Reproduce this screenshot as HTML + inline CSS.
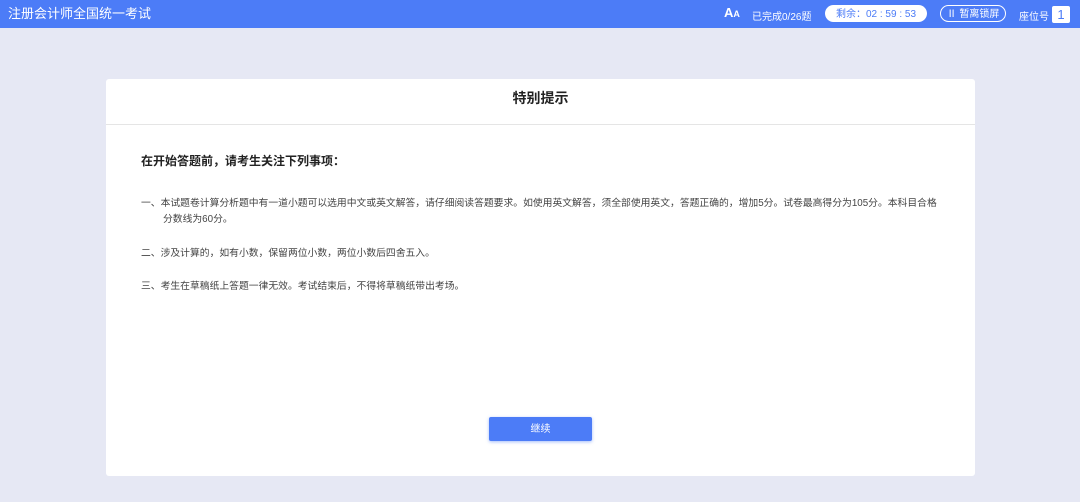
<!DOCTYPE html>
<html><head><meta charset="utf-8"><style>
*{margin:0;padding:0;box-sizing:border-box}
body{width:1080px;height:502px;background:#e6e8f4;font-family:"Liberation Sans","Noto Sans CJK SC",sans-serif;position:relative;overflow:hidden;color:#333}
.hd{position:absolute;left:0;top:0;width:1080px;height:28px;background:#4c7cf7;color:#fff}
.t{position:absolute;left:8px;top:3px;font-size:13px}
.a{position:absolute;font-size:10px;top:8px}
.pill{position:absolute;top:5px;height:17px;border-radius:9px;font-size:10px;text-align:center}
.pill span{position:absolute;left:0;right:0;top:4px;line-height:12px}
.card{position:absolute;left:106px;top:79px;width:869px;height:397px;background:#fff;border-radius:3px}
.ct{height:46px;border-bottom:1px solid #e5e5e5;text-align:center;font-size:14px;font-weight:bold;line-height:38px;color:#222}
.p{position:absolute;font-size:9.8px;color:#444;white-space:nowrap}
.btn{position:absolute;left:383px;top:338px;width:103px;height:24px;background:#4c7cf7;color:#fff;font-size:10px;text-align:center;line-height:25px;border-radius:2px;box-shadow:0 1px 3px rgba(76,124,247,.5)}
</style></head><body>
<div class="hd">
<div class="t">注册会计师全国统一考试</div>
<div class="a" style="left:724px;top:5px;font-size:13px;font-weight:bold">A<span style="font-size:9px">A</span></div>
<div class="a" style="left:752px">已完成0/26题</div>
<div class="pill" style="left:825px;width:102px;background:#fff;color:#4c7cf7"><span>剩余：02 : 59 : 53</span></div>
<div class="pill" style="left:940px;width:66px;border:1px solid #fff;color:#fff"><span style="top:3px">Ⅱ 暂离锁屏</span></div>
<div class="a" style="left:1019px">座位号</div>
<div style="position:absolute;left:1052px;top:6px;width:18px;height:17px;background:#fff;color:#4c7cf7;font-size:13px;text-align:center;line-height:17px;border-radius:2px">1</div>
</div>
<div class="card">
<div class="ct">特别提示</div>
<div class="p" style="left:35px;top:73px;font-size:12px;font-weight:bold;color:#222">在开始答题前，请考生关注下列事项：</div>
<div class="p" style="left:35px;top:116px">一、本试题卷计算分析题中有一道小题可以选用中文或英文解答，请仔细阅读答题要求。如使用英文解答，须全部使用英文，答题正确的，增加5分。试卷最高得分为105分。本科目合格</div>
<div class="p" style="left:57px;top:132px">分数线为60分。</div>
<div class="p" style="left:35px;top:166px">二、涉及计算的，如有小数，保留两位小数，两位小数后四舍五入。</div>
<div class="p" style="left:35px;top:199px">三、考生在草稿纸上答题一律无效。考试结束后，不得将草稿纸带出考场。</div>
<div class="btn">继续</div>
</div>
</body></html>
